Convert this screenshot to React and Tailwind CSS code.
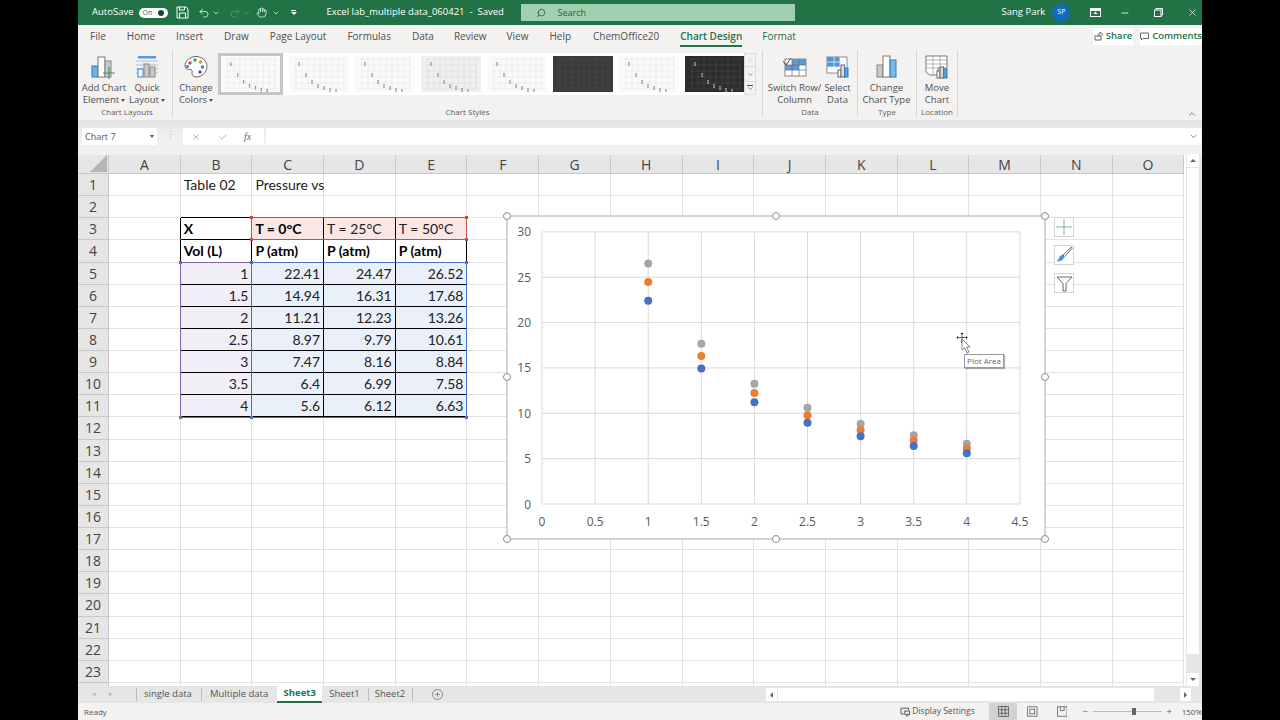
import React from 'react';
import { Search, Undo2, Redo2, Minus, X, ChevronDown, ChevronUp, Hand, Plus, Check } from 'lucide-react';

const UI = "font-['Open_Sans',sans-serif]";
const COLS = ['A', 'B', 'C', 'D', 'E', 'F', 'G', 'H', 'I', 'J', 'K', 'L', 'M', 'N', 'O'];
const COL_W = 71.7;
const ROW_H = 22.14;

const TABLE = {
  3: ['X', 'T = 0°C', 'T = 25°C', 'T = 50°C'],
  4: ['Vol (L)', 'P (atm)', 'P (atm)', 'P (atm)'],
  5: ['1', '22.41', '24.47', '26.52'],
  6: ['1.5', '14.94', '16.31', '17.68'],
  7: ['2', '11.21', '12.23', '13.26'],
  8: ['2.5', '8.97', '9.79', '10.61'],
  9: ['3', '7.47', '8.16', '8.84'],
  10: ['3.5', '6.4', '6.99', '7.58'],
  11: ['4', '5.6', '6.12', '6.63'],
};

function Caret() {
  return <span className="inline-block align-middle ml-0.5 w-0 h-0 border-l-[2.5px] border-r-[2.5px] border-t-[3px] border-l-transparent border-r-transparent border-t-[#555]" />;
}

// Ribbon thumbnail of the scatter plot
function ChartThumb({ dark, shaded, selected }) {
  const line = dark ? '#4a4a4a' : shaded ? '#dadada' : '#e6e6e6';
  const bg = dark ? (selected ? '#2c2c2c' : '#3b3b3b') : shaded ? '#f0f0f0' : '#fafafa';
  const xs = [10, 17, 23, 29, 35, 41, 47];
  const ys = [8, 19, 26, 30, 32, 34, 35];
  return (
    <svg width="60" height="36" viewBox="0 0 60 36">
      <rect width="60" height="36" fill={bg} />
      {[7, 13, 19, 25, 31, 37, 43, 49, 55].map((x) => <line key={x} x1={x} y1="3" x2={x} y2="33" stroke={line} strokeWidth="0.6" />)}
      {[3, 9, 15, 21, 27, 33].map((y) => <line key={y} x1="5" y1={y} x2="56" y2={y} stroke={line} strokeWidth="0.6" />)}
      {xs.map((x, i) => (dark && !selected ? null : (
        <g key={x} fill={dark ? '#d9b8a8' : '#8f8f8f'}>
          <circle cx={x} cy={ys[i] - 1.2} r="0.8" />
          <circle cx={x} cy={ys[i]} r="0.8" fill={dark ? '#d08a6a' : '#a98b85'} />
          <circle cx={x} cy={ys[i] + 1.2} r="0.8" />
        </g>
      )))}
    </svg>
  );
}

function AddChartIcon() {
  return (
    <svg width="26" height="24" viewBox="0 0 26 24">
      <rect x="1" y="11" width="6" height="11" fill="#6db3ea" stroke="#2f7fc4" />
      <rect x="7" y="2" width="7" height="20" fill="#fff" stroke="#777" />
      <rect x="14" y="6" width="6" height="16" fill="#c9c9c9" stroke="#888" />
      <path d="M18 12v12M12 18h12" stroke="#3c9a5f" strokeWidth="1.2" />
    </svg>
  );
}

function QuickLayoutIcon() {
  return (
    <svg width="24" height="24" viewBox="0 0 24 24">
      <rect x="3" y="1" width="18" height="2.5" fill="#5b9bd5" />
      <path d="M1 6h22M1 10h22M1 14h22M1 18h22" stroke="#9cc3e6" />
      <rect x="3" y="14" width="5" height="8" fill="#fff" stroke="#2f7fc4" />
      <rect x="9" y="9" width="5" height="13" fill="#c9c9c9" stroke="#888" />
      <rect x="15" y="12" width="5" height="10" fill="#c9c9c9" stroke="#888" />
    </svg>
  );
}

function PaletteIcon() {
  return (
    <svg width="24" height="24" viewBox="0 0 24 24">
      <path d="M12 1.5C5.5 1.5 1 6 1 11c0 3 3 3.5 5 3.5 2 0 2.5 1 2 3-.4 2 1 4.5 4 4.5 6 0 11-5 11-10.500S18 1.500 12 1.500z" fill="#fff" stroke="#666" />
      <circle cx="6" cy="8" r="1.7" fill="#e0483e" />
      <circle cx="11" cy="5" r="1.700" fill="#3f9b4f" />
      <circle cx="16.500" cy="7" r="1.700" fill="#e88a2d" />
      <circle cx="18.500" cy="12" r="1.700" fill="#2f7fc4" />
      <circle cx="16" cy="17" r="1.700" fill="#6b3fa0" />
      <circle cx="3.500" cy="11.500" r="1.500" fill="#2f7fc4" />
    </svg>
  );
}

function SwitchIcon() {
  return (
    <svg width="24" height="24" viewBox="0 0 24 24">
      <rect x="2" y="4" width="21" height="17" fill="#fff" stroke="#888" />
      <rect x="2" y="10" width="14" height="5" fill="#5b9bd5" />
      <rect x="9" y="4" width="14" height="6" fill="#5b9bd5" />
      <path d="M2 10h21M2 15h21M9 4v17M16 4v17" stroke="#6c6c6c" strokeWidth="0.7" />
      <path d="M0 6l3 4 5-7" fill="none" stroke="#444" />
    </svg>
  );
}

function SelectDataIcon() {
  return (
    <svg width="24" height="24" viewBox="0 0 24 24">
      <rect x="1" y="2" width="20" height="16" fill="#fff" stroke="#888" />
      <rect x="1" y="2" width="13" height="10" fill="#4f97d8" />
      <path d="M1 7h20M1 12h20M8 2v16M14 2v16" stroke="#eef" strokeWidth="0.8" />
      <rect x="12" y="15" width="3" height="7" fill="#fff" stroke="#666" />
      <rect x="15" y="10" width="3.500" height="12" fill="#ddd" stroke="#666" />
      <rect x="18.500" y="13" width="3.500" height="9" fill="#5b9bd5" stroke="#2f7fc4" />
    </svg>
  );
}

function ChangeTypeIcon() {
  return (
    <svg width="24" height="24" viewBox="0 0 24 24">
      <rect x="2" y="10" width="6" height="12" fill="#c9c9c9" stroke="#888" />
      <rect x="8" y="1" width="7" height="21" fill="#fff" stroke="#777" />
      <rect x="15" y="5" width="6" height="17" fill="#7cb8ec" stroke="#2f7fc4" />
    </svg>
  );
}

function MoveChartIcon() {
  return (
    <svg width="24" height="24" viewBox="0 0 24 24">
      <path d="M1 1h21v12H13v7H5l-4-3z" fill="#fff" stroke="#777" />
      <path d="M1 5h21M1 9h21M1 13h12M8 1v19M15 1v12" stroke="#999" strokeWidth="0.7" />
      <rect x="12" y="16" width="3" height="7" fill="#fff" stroke="#666" />
      <rect x="15" y="12" width="3.500" height="11" fill="#ddd" stroke="#666" />
      <rect x="18.500" y="14" width="3.500" height="9" fill="#5b9bd5" stroke="#2f7fc4" />
    </svg>
  );
}

function RibbonButton({ icon, lines, caret, className }) {
  return (
    <div className={`flex flex-col items-center shrink-0 ${className}`}>
      <div className="h-[25px] flex items-end">{icon}</div>
      <div className="mt-[3px] text-[9.5px] leading-[12px] text-[#505050] text-center whitespace-nowrap">
        <div>{lines[0]}</div>
        <div>{lines[1]}{caret && <Caret />}</div>
      </div>
    </div>
  );
}

function Group({ label, children, className }) {
  return (
    <div className={`relative flex flex-col border-r border-[#d6d6d6] h-[66px] ${className}`}>
      <div className="flex flex-1 items-start pt-[4px]">{children}</div>
      <div className="text-[8px] leading-[12px] text-[#606060] text-center whitespace-nowrap">{label}</div>
    </div>
  );
}

function TitleBar() {
  return (
    <div className="h-[25px] bg-[#217346] flex items-center text-white shrink-0 text-[9.5px]">
      <span className="ml-[14px] whitespace-nowrap">AutoSave</span>
      <div className="ml-[5px] w-[29px] h-[10px] rounded-full bg-white flex items-center justify-between px-[4px]">
        <span className="text-[7px] text-[#217346] leading-none">On</span>
        <span className="w-[6px] h-[6px] rounded-full bg-[#16492c]" />
      </div>
      <svg className="ml-[8px]" width="13" height="13" viewBox="0 0 13 13" fill="none" stroke="#fff">
        <path d="M1 1h9l2 2v9H1z" /><path d="M3.500 1v3h5V1M3.500 12V7h6v5" />
      </svg>
      <Undo2 className="ml-[9px]" size={12} strokeWidth={1.5} />
      <ChevronDown className="ml-[2px]" size={8} />
      <Redo2 className="ml-[9px] text-[#5f9c7b]" size={12} strokeWidth={1.500} />
      <ChevronDown className="ml-[2px] text-[#5f9c7b]" size={8} />
      <Hand className="ml-[5px]" size={11} strokeWidth={1.500} />
      <ChevronDown className="ml-[5px]" size={8} />
      <span className="ml-[11px] flex flex-col items-center gap-[1px]">
        <span className="w-[5px] h-px bg-white" />
        <span className="w-0 h-0 border-l-[3px] border-r-[3px] border-t-[3px] border-l-transparent border-r-transparent border-t-white" />
      </span>
      <span className="ml-[30px] w-[176px] whitespace-nowrap text-[9.500px]">Excel lab_multiple data_060421&nbsp; -&nbsp; Saved <Caret /></span>
      <div className="ml-[18px] w-[274px] h-[17px] bg-[#a0d0af] flex items-center text-[#2d5f41]">
        <Search className="ml-[15px] -scale-x-100" size={10} />
        <span className="ml-[12px] text-[9px]">Search</span>
      </div>
      <span className="ml-[207px] whitespace-nowrap">Sang Park</span>
      <span className="ml-[7px] w-[18px] h-[18px] rounded-full bg-[#0f6cbd] text-[7px] flex items-center justify-center">SP</span>
      <svg className="ml-[20px]" width="11" height="9" viewBox="0 0 11 9">
        <rect x="0.500" y="0.500" width="10" height="8" fill="none" stroke="#fff" /><path d="M0 1h11v2H0z" fill="#fff" /><path d="M5.500 3.500l2 2.500h-4z" fill="#fff" />
      </svg>
      <Minus className="ml-[19px]" size={10} />
      <svg className="ml-[24px]" width="9" height="9" viewBox="0 0 9 9" fill="none" stroke="#fff">
        <rect x="0.500" y="2" width="6.500" height="6.500" /><path d="M2 2V.5h6.500V7H7" />
      </svg>
      <X className="ml-[24px]" size={11} strokeWidth={1.500} />
    </div>
  );
}

function RibbonTabs() {
  const tabs = [
    ['File', 12], ['Home', 21], ['Insert', 21], ['Draw', 21], ['Page Layout', 21], ['Formulas', 21],
    ['Data', 21], ['Review', 20], ['View', 20], ['Help', 21], ['ChemOffice20', 22],
  ];
  return (
    <div className="h-[23px] bg-[#f3f2f1] flex items-center shrink-0 text-[10px] text-[#505050]">
      {tabs.map(([t, ml]) => <span key={t} className="whitespace-nowrap" style={{ marginLeft: ml }}>{t}</span>)}
      <span className="relative ml-[21px] font-semibold text-[#217346] whitespace-nowrap">
        Chart Design
        <span className="absolute left-0 right-0 -bottom-[3px] h-[2px] bg-[#217346]" />
      </span>
      <span className="ml-[20px] text-[#217346]">Format</span>
      <button className="ml-[297px] h-[17px] w-[50px] bg-white text-[#217346] font-semibold flex items-center justify-center gap-[3px] text-[9.500px]">
        <svg width="9" height="9" viewBox="0 0 9 9" fill="none" stroke="#666"><path d="M1 3v5h6V5M3 5c0-2 1-3 3-3V0l3 2.500L6 5V3.500C4.500 3.500 3.500 4 3 5z" /></svg>
        Share
      </button>
      <button className="ml-[7px] h-[17px] w-[73px] bg-white text-[#217346] font-semibold flex items-center justify-center gap-[3px] text-[9.500px]">
        <svg width="9" height="9" viewBox="0 0 9 9" fill="none" stroke="#666"><path d="M.5 1h8v5.500H3L1.500 8V6.500h-1z" /></svg>
        Comments
      </button>
    </div>
  );
}

function Ribbon() {
  const thumbs = [{}, { shaded: false }, {}, { shaded: true }, {}, { dark: true }, {}, { dark: true, selected: true }];
  return (
    <div className="relative h-[72px] bg-[#f3f2f1] flex pt-[2px] shrink-0">
      <Group label="Chart Layouts" className="ml-[4px] w-[91px]">
        <RibbonButton icon={<AddChartIcon />} lines={['Add Chart', 'Element']} caret className="w-[44px]" />
        <RibbonButton icon={<QuickLayoutIcon />} lines={['Quick', 'Layout']} caret className="w-[42px]" />
      </Group>
      <div className="flex flex-col w-[590px] h-[66px] border-r border-[#d6d6d6]">
        <div className="flex flex-1 items-start">
          <RibbonButton icon={<PaletteIcon />} lines={['Change', 'Colors']} caret className="ml-[3px] w-[40px] pt-[4px]" />
          <div className="ml-[2px] mt-[3px] bg-white h-[42px] w-[526px] flex items-center">
            {thumbs.map((t, i) => (
              <div key={i} className={i === 0 ? 'border-[3px] border-[#c6c6c6] w-[65px] h-[42px] flex items-center justify-center' : 'ml-[6px] w-[60px] flex'}>
                <ChartThumb {...t} />
              </div>
            ))}
          </div>
          <div className="mt-[3px] flex flex-col w-[12px] text-[#555]">
            <div className="h-[14px] border border-[#dcdcdc] flex items-center justify-center"><ChevronUp size={7} className="text-[#bbb]" /></div>
            <div className="h-[14px] border-x border-[#dcdcdc] flex items-center justify-center"><ChevronDown size={7} /></div>
            <div className="h-[14px] border border-[#dcdcdc] flex flex-col items-center justify-center">
              <span className="w-[6px] h-px bg-[#555] mb-[1px]" />
              <ChevronDown size={7} className="-mt-[2px]" />
            </div>
          </div>
        </div>
        <div className="text-[8px] leading-[12px] text-[#606060] text-center">Chart Styles</div>
      </div>
      <Group label="Data" className="w-[95px]">
        <RibbonButton icon={<SwitchIcon />} lines={['Switch Row/', 'Column']} className="ml-[7px] w-[49px]" />
        <RibbonButton icon={<SelectDataIcon />} lines={['Select', 'Data']} className="ml-[6px] w-[25px]" />
      </Group>
      <Group label="Type" className="w-[59px]">
        <RibbonButton icon={<ChangeTypeIcon />} lines={['Change', 'Chart Type']} className="ml-[7px] w-[43px]" />
      </Group>
      <Group label="Location" className="w-[41px]">
        <RibbonButton icon={<MoveChartIcon />} lines={['Move', 'Chart']} className="ml-[8px] w-[24px]" />
      </Group>
      <ChevronUp className="absolute right-[5px] bottom-[1px] text-[#666]" size={10} />
    </div>
  );
}

function FormulaBar() {
  return (
    <div className="h-[35px] shrink-0 bg-gradient-to-b from-[#e4e4e4] via-[#f0f0f0] to-[#f0f0f0] flex items-start pt-[8px] text-[9px] text-[#555]">
      <div className="ml-[4px] w-[75px] h-[17px] bg-white flex items-center justify-between px-[3px]">
        <span>Chart 7</span><Caret />
      </div>
      <span className="ml-[9px] mt-[2px] text-[#aaa] leading-none">⋮</span>
      <div className="ml-[8px] w-[81px] h-[17px] bg-white flex items-center text-[#aaa]">
        <X className="ml-[8px]" size={10} />
        <Check className="ml-[17px]" size={10} />
        <span className="ml-[16px] font-['Liberation_Serif',serif] italic text-[#666] text-[10px]">fx</span>
      </div>
      <div className="ml-[2px] w-[935px] h-[17px] bg-white flex items-center justify-end pr-[3px]">
        <ChevronDown size={9} className="text-[#555]" />
      </div>
    </div>
  );
}

function CellText({ row, idx }) {
  const text = TABLE[row]?.[idx];
  if (text === undefined) return null;
  const head = row === 3 || row === 4;
  const bold = row === 4 || (row === 3 && idx < 2);
  return (
    <span className={`block w-full truncate px-[3px] ${head ? 'text-left' : 'text-right'} ${bold ? 'font-bold text-black' : 'text-[#222]'}`}>{text}</span>
  );
}

function cellBg(row, c) {
  if (row === 3 && c >= 2 && c <= 4) return 'bg-[#fbe6e6]';
  if (row >= 5 && row <= 11 && c === 1) return 'bg-[#f2eef8]';
  if (row >= 5 && row <= 11 && c >= 2 && c <= 4) return 'bg-[#e9f0f9]';
  return 'bg-white';
}

function Cell({ row, c }) {
  const inTable = row >= 3 && row <= 11;
  const rightBlack = inTable && c <= 4;
  const bottomBlack = row >= 2 && row <= 11 && c >= 1 && c <= 4;
  let content = null;
  if (row === 1 && c === 1) content = <span className="pl-[3px] whitespace-nowrap text-[#222]">Table 02</span>;
  if (row === 1 && c === 2) content = <span className="pl-[3px] whitespace-nowrap text-[#222]">Pressure vs Volume at various temperatures</span>;
  if (inTable && c >= 1 && c <= 4) content = <CellText row={row} idx={c - 1} />;
  return (
    <div className={`flex items-center min-w-0 border-r border-b ${cellBg(row, c)} ${rightBlack ? 'border-r-black' : 'border-r-[#e2e2e2]'} ${bottomBlack ? 'border-b-black' : 'border-b-[#e2e2e2]'}`}>
      {content}
    </div>
  );
}

function RangeBox({ c1, c2, r1, r2, color }) {
  const style = {
    left: 31 + COL_W * c1 - 1,
    top: 19 + ROW_H * (r1 - 1) - 1,
    width: COL_W * (c2 - c1 + 1) + 1,
    height: ROW_H * (r2 - r1 + 1) + 1,
    borderColor: color,
  };
  const dot = { backgroundColor: color };
  return (
    <div className="absolute border pointer-events-none" style={style}>
      <span className="absolute -left-[2px] -top-[2px] w-[3px] h-[3px]" style={dot} />
      <span className="absolute -right-[2px] -top-[2px] w-[3px] h-[3px]" style={dot} />
      <span className="absolute -left-[2px] -bottom-[2px] w-[3px] h-[3px]" style={dot} />
      <span className="absolute -right-[2px] -bottom-[2px] w-[3px] h-[3px]" style={dot} />
    </div>
  );
}

function ScatterChart() {
  const px = (v) => 35 + v * 106.2;
  const py = (v) => 288 - v * 9.07;
  const xv = [1, 1.5, 2, 2.5, 3, 3.5, 4];
  const series = [
    { color: '#a5a5a5', idx: 3 },
    { color: '#ed7d31', idx: 2 },
    { color: '#4472c4', idx: 1 },
  ];
  const rows = [5, 6, 7, 8, 9, 10, 11];
  const handles = [[0, 0], [269, 0], [538, 0], [0, 161], [538, 161], [0, 323], [269, 323], [538, 323]];
  return (
    <svg className="absolute left-[429px] top-[61px] overflow-visible" width="538" height="323" viewBox="0 0 538 323">
      <rect x="0" y="0" width="538" height="323" fill="#fff" stroke="#a9a9a9" />
      {[0, 5, 10, 15, 20, 25, 30].map((v) => (
        <g key={v}>
          <line x1="35" x2="513" y1={py(v)} y2={py(v)} stroke="#d9d9d9" />
          <text x="24" y={py(v) + 4.500} textAnchor="end" fontSize="12" fill="#595959" fontFamily="Open Sans, sans-serif">{v}</text>
        </g>
      ))}
      {[0, 0.5, 1, 1.5, 2, 2.5, 3, 3.5, 4, 4.5].map((v) => (
        <g key={v}>
          <line y1="16" y2="288" x1={px(v)} x2={px(v)} stroke="#d9d9d9" />
          <text x={px(v)} y="310" textAnchor="middle" fontSize="12" fill="#595959" fontFamily="Open Sans, sans-serif">{v}</text>
        </g>
      ))}
      {series.map((s) => rows.map((r, i) => (
        <circle key={`${s.idx}-${r}`} cx={px(xv[i])} cy={py(parseFloat(TABLE[r][s.idx]))} r="4" fill={s.color} />
      )))}
      {handles.map(([x, y]) => (
        <circle key={`${x}-${y}`} cx={x} cy={y} r="3.500" fill="#fff" stroke="#8c8c8c" />
      ))}
    </svg>
  );
}

function ChartTools() {
  return (
    <div className="absolute left-[976px] top-[62px] flex flex-col gap-[8px]">
      <div className="w-[20px] h-[20px] bg-white border border-[#d4d4d4] flex items-center justify-center">
        <svg width="16" height="16" viewBox="0 0 16 16"><path d="M8 0v16M0 8h16" stroke="#7fb592" /></svg>
      </div>
      <div className="w-[20px] h-[20px] bg-white border border-[#d4d4d4] flex items-center justify-center">
        <svg width="18" height="18" viewBox="0 0 18 18">
          <path d="M16.500 1L8 9l1.500 1.500L17 2.500z" fill="#fff" stroke="#666" />
          <path d="M8 9c-2-.5-3.500 1-4 3-.3 1.500-2 2.500-2.500 3 3 1 6.500 0 8-4.500z" fill="#4f8fd6" />
        </svg>
      </div>
      <div className="w-[20px] h-[20px] bg-white border border-[#d4d4d4] flex items-center justify-center">
        <svg width="17" height="17" viewBox="0 0 17 17"><path d="M1 2h15l-6 6.500V16H7V8.500z" fill="#fff" stroke="#666" /></svg>
      </div>
    </div>
  );
}

function CursorTip() {
  return (
    <>
      <svg className="absolute left-[877px] top-[177px]" width="16" height="24" viewBox="0 0 16 24">
        <path d="M7 1v10M2 5.500h10" stroke="#222" strokeWidth="0.7" />
        <path d="M7 .5l1.500 1.500h-3zM7 11l1.500-1.500h-3zM1.500 5.500L3 4v3zM12.500 5.500L11 4v3z" fill="#111" />
        <path d="M7 7v11l2.500-2.200L12 21l2-1-2.400-5H15z" fill="#fff" stroke="#555" strokeWidth="0.7" />
      </svg>
      <div className="absolute left-[886px] top-[199px] w-[40px] h-[14px] bg-white border border-[#9a9a9a] shadow-[1px_1px_1px_rgba(0,0,0,0.3)] text-[8px] leading-[12px] text-[#666] text-center whitespace-nowrap">Plot Area</div>
    </>
  );
}

function SheetGrid() {
  const rows = Array.from({ length: 24 }, (_, i) => i + 1);
  return (
    <div className="relative flex-1 overflow-hidden min-w-0 bg-white">
      <div className="grid grid-cols-[31px_repeat(15,71.7px)] grid-rows-[19px_repeat(24,22.14px)] font-['Lato',sans-serif] text-[14px]">
        <div className="bg-[#e6e6e6] border-r border-b border-[#c8c8c8] relative overflow-hidden">
          <span className="absolute right-[2px] bottom-[2px] w-0 h-0 border-l-[15px] border-t-[15px] border-l-transparent border-t-transparent border-r-[0px] border-b-[0px]" />
          <svg className="absolute right-[1px] bottom-[1px]" width="17" height="17" viewBox="0 0 17 17"><path d="M17 0v17H0z" fill="#b4b4b4" /></svg>
        </div>
        {COLS.map((c) => (
          <div key={c} className={`${UI} bg-[#e6e6e6] border-r border-b border-[#c8c8c8] text-[#444] flex items-center justify-center text-[14px]`}>{c}</div>
        ))}
        {rows.map((row) => (
          <React.Fragment key={row}>
            <div className={`${UI} bg-[#e6e6e6] border-r border-b border-[#c8c8c8] text-[#444] flex items-center justify-center text-[14px]`}>{row}</div>
            {COLS.map((c, i) => <Cell key={c} row={row} c={i} />)}
          </React.Fragment>
        ))}
      </div>
      <RangeBox c1={2} c2={4} r1={3} r2={3} color="#c0504d" />
      <RangeBox c1={1} c2={1} r1={5} r2={11} color="#8064a2" />
      <RangeBox c1={2} c2={4} r1={5} r2={11} color="#4472c4" />
      <ScatterChart />
      <ChartTools />
      <CursorTip />
    </div>
  );
}

function VScrollbar() {
  return (
    <div className="w-[16px] shrink-0 bg-[#e6e6e6] flex flex-col items-center pt-[-1px] pr-[2px]">
      <div className="w-[12px] h-[13px] bg-white mt-[-1px] flex items-center justify-center">
        <span className="w-0 h-0 border-l-[3px] border-r-[3px] border-b-[3px] border-l-transparent border-r-transparent border-b-[#666]" />
      </div>
      <div className="w-[12px] h-[486px] bg-white mt-px" />
      <div className="flex-1" />
      <div className="w-[12px] h-[13px] bg-white flex items-center justify-center">
        <span className="w-0 h-0 border-l-[3px] border-r-[3px] border-t-[3px] border-l-transparent border-r-transparent border-t-[#666]" />
      </div>
    </div>
  );
}

function SheetTabs() {
  return (
    <div className={`h-[17px] shrink-0 bg-[#e6e6e6] flex items-center text-[9.500px] text-[#555] ${UI}`}>
      <span className="ml-[14px] text-[#bbb] text-[7px]">◂</span>
      <span className="ml-[13px] text-[#bbb] text-[7px]">▸</span>
      <span className="ml-[23px] h-[13px] border-l border-[#bcbcbc]" />
      <span className="ml-[7px] whitespace-nowrap">single data</span>
      <span className="ml-[9px] h-[13px] border-l border-[#bcbcbc]" />
      <span className="ml-[8px] whitespace-nowrap">Multiple data</span>
      <span className="ml-[9px] h-[17px] w-[45px] bg-white border-b-2 border-[#217346] text-[#217346] font-bold flex items-center justify-center">Sheet3</span>
      <span className="ml-[7px]">Sheet1</span>
      <span className="ml-[8px] h-[13px] border-l border-[#bcbcbc]" />
      <span className="ml-[6px]">Sheet2</span>
      <span className="ml-[7px] h-[13px] border-l border-[#bcbcbc]" />
      <span className="ml-[19px] w-[11px] h-[11px] rounded-full border border-[#888] flex items-center justify-center"><Plus size={7} /></span>
      <div className="ml-[323px] w-[11px] h-[13px] bg-white flex items-center justify-center">
        <span className="w-0 h-0 border-t-[3px] border-b-[3px] border-r-[3px] border-t-transparent border-b-transparent border-r-[#666]" />
      </div>
      <div className="ml-px w-[376px] h-[13px] bg-white" />
      <div className="ml-[26px] w-[11px] h-[13px] bg-white flex items-center justify-center">
        <span className="w-0 h-0 border-t-[3px] border-b-[3px] border-l-[3px] border-t-transparent border-b-transparent border-l-[#666]" />
      </div>
    </div>
  );
}

function StatusBar() {
  return (
    <div className={`h-[17px] shrink-0 bg-[#f3f2f1] flex items-center text-[8px] text-[#555] ${UI}`}>
      <span className="ml-[6px]">Ready</span>
      <svg className="ml-[793px]" width="11" height="10" viewBox="0 0 11 10" fill="none" stroke="#555">
        <path d="M1 7V1h8v2" /><path d="M1 7h3" /><rect x="5" y="4" width="5" height="3.500" /><path d="M6 9h3" />
      </svg>
      <span className="ml-[2px] whitespace-nowrap text-[8.500px]">Display Settings</span>
      <div className="ml-[14px] w-[30px] h-[17px] bg-[#d2d2d2] flex items-center justify-center">
        <svg width="11" height="11" viewBox="0 0 11 11" fill="none" stroke="#555" strokeWidth="0.8"><path d="M.5.5h10v10H.5zM.5 3.800h10M.5 7.200h10M3.800.5v10M7.200.5v10" /></svg>
      </div>
      <svg className="ml-[10px]" width="11" height="11" viewBox="0 0 11 11" fill="none" stroke="#555" strokeWidth="0.8"><path d="M.5.5h10v10H.5z" /><rect x="3" y="3" width="5" height="5" /></svg>
      <svg className="ml-[19px]" width="11" height="11" viewBox="0 0 11 11" fill="none" stroke="#555" strokeWidth="0.8"><path d="M.5.5h10v10H.5zM3.500.5v4h4v-4" /></svg>
      <Minus className="ml-[15px]" size={7} />
      <div className="ml-[4px] relative w-[72px] h-px bg-[#bbb]">
        <span className="absolute left-[39px] -top-[3px] w-[4px] h-[7px] bg-[#666]" />
      </div>
      <Plus className="ml-[4px]" size={7} />
      <span className="ml-[9px]">150%</span>
    </div>
  );
}

export default function App() {
  return (
    <div className={`w-[1280px] h-[720px] bg-black flex justify-center overflow-hidden ${UI}`}>
      <div className="w-[1124px] h-full flex flex-col bg-white">
        <TitleBar />
        <RibbonTabs />
        <Ribbon />
        <FormulaBar />
        <div className="flex flex-1 min-h-0 bg-[#e6e6e6]">
          <SheetGrid />
          <VScrollbar />
        </div>
        <SheetTabs />
        <StatusBar />
      </div>
    </div>
  );
}
